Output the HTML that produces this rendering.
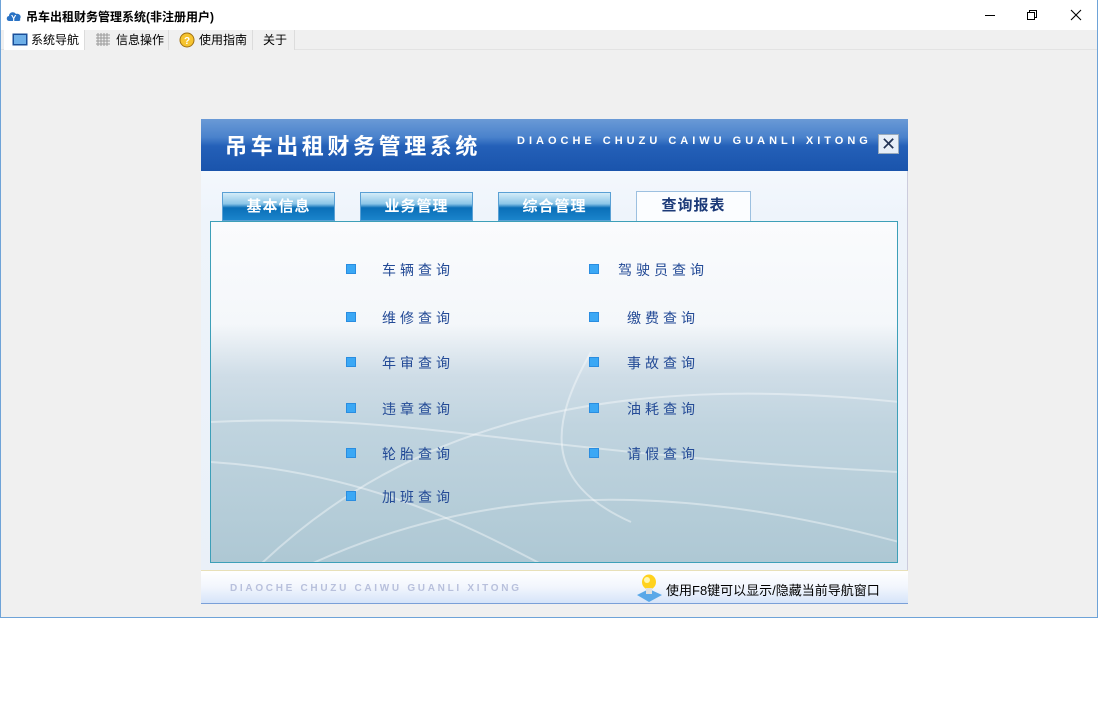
<!DOCTYPE html>
<html><head><meta charset="utf-8"><style>
*{margin:0;padding:0;box-sizing:border-box}
body{width:1098px;height:713px;background:#fff;position:relative;overflow:hidden;font-family:"Liberation Sans","Noto Sans CJK SC",sans-serif}
.win{position:absolute;left:0;top:0;width:1098px;height:618px;border:1px solid #6ea3d8;border-top:none;background:#f0f0f0}
.title{position:absolute;left:0;top:0;width:1096px;height:30px;background:#fff;font-size:12px;font-weight:bold;color:#000}
.title span{position:absolute;left:25px;top:8px}
.ctl{position:absolute;top:6px;font-size:12px;color:#222;font-weight:normal}
.menu{position:absolute;left:0;top:30px;height:20px;width:1096px;background:#f0f0f0;border-bottom:1px solid #e3e3e3;font-size:12px}
.mi{position:absolute;top:0;height:20px;line-height:21px;border-right:1px solid #dcdcdc;background:#f0f0f0}
.panel{position:absolute;left:200px;top:119px;width:707px;height:485px;background:linear-gradient(#fafcff,#eef4fb 20%,#e9f0f8);border-right:1px solid #ccd;}
.hdr{position:absolute;left:0;top:0;width:707px;height:52px;background:linear-gradient(#6a9ad6 0%,#4a82cc 35%,#2460b8 52%,#1a54ac 100%)}
.hdr .t{position:absolute;left:24px;top:10px;font-size:22px;color:#fff;letter-spacing:3.6px;font-weight:bold}
.hdr .e{position:absolute;left:316px;top:16px;font-size:11px;color:#fff;letter-spacing:4px;font-weight:bold}
.x{position:absolute;left:677px;top:15px;width:21px;height:20px;background:#e6eef8;border:1px solid #9ab;color:#235;font-size:18px;line-height:18px;text-align:center}
.tab{position:absolute;top:73px;width:113px;height:29px;background:linear-gradient(#d4ecf8,#8cc6e8 40%,#0a6fb8 55%,#1a84cb);border:1px solid #5aa0d4;color:#fff;font-size:15px;font-weight:bold;text-align:center;line-height:28px;letter-spacing:1px}
.tab.a{background:#fbfdff;color:#1c3a78;height:31px;border-color:#9cc0e0;border-bottom:none;width:115px}
.box{position:absolute;left:9px;top:102px;width:688px;height:342px;border:1px solid #3d9fb8;background:linear-gradient(#fafbfd 0%,#f4f7fa 30%,#cfdde7 45%,#c0d4df 60%,#aec8d4 100%);overflow:hidden}
.it{position:absolute;font-size:14px;color:#234a96;letter-spacing:4px}
.sq{position:absolute;width:10px;height:10px;background:#3ba8f5;border:1px solid #2a8de0}
.foot{position:absolute;left:0;top:451px;width:707px;height:34px;border-top:1px solid #e8e0b8;background:linear-gradient(#fff,#f2f6fd 50%,#d6e4f9);border-bottom:1px solid #7aa0d8}
.foot .e{position:absolute;left:29px;top:12px;font-size:10px;color:#b8c0dc;letter-spacing:2.7px;font-weight:bold}
.foot .h{position:absolute;left:465px;top:9px;font-size:13px;color:#000}
</style></head><body>
<div class="win">
<div class="title">
<svg style="position:absolute;left:5px;top:9px" width="16" height="14" viewBox="0 0 16 14"><path d="M3 12 C0 12 0 7 3 7 C3 3 8 2 10 5 C13 4 16 7 14 10 C15 12 13 12 12 12Z" fill="#2a72c4"/><text x="5" y="12" font-size="8" fill="#fff" font-weight="bold">Y</text></svg>
<span>吊车出租财务管理系统(非注册用户)</span>
<svg style="position:absolute;left:983px;top:10px" width="12" height="10"><path d="M1 5.5h10" stroke="#000"/></svg>
<svg style="position:absolute;left:1025px;top:9px" width="12" height="12"><path d="M1.5 3.5h7v7h-7zM3.5 3.5v-2h7v7h-2" fill="none" stroke="#000"/></svg>
<svg style="position:absolute;left:1069px;top:9px" width="12" height="12"><path d="M1 1l10 10M11 1L1 11" stroke="#000" stroke-width="1.1"/></svg>
</div>
<div class="menu">
<div class="mi" style="left:3px;width:81px;background:#fff"><svg style="position:absolute;left:8px;top:3px" width="16" height="13"><rect x="0.5" y="0.5" width="15" height="12" fill="#1a4f9a"/><rect x="2" y="2" width="12" height="9" fill="#6fb0e8"/></svg><span style="position:absolute;left:27px">系统导航</span></div>
<div class="mi" style="left:84px;width:84px"><svg style="position:absolute;left:11px;top:3px" width="14" height="13"><g stroke="#999" stroke-width="1"><path d="M0 2h14M0 5h14M0 8h14M0 11h14M2 0v13M5 0v13M8 0v13M11 0v13"/></g></svg><span style="position:absolute;left:31px">信息操作</span></div>
<div class="mi" style="left:168px;width:84px"><svg style="position:absolute;left:10px;top:2px" width="16" height="16"><circle cx="8" cy="8" r="7" fill="#f6c430" stroke="#a07010"/><text x="5" y="12" font-size="10" fill="#fff" font-weight="bold">?</text></svg><span style="position:absolute;left:30px">使用指南</span></div>
<div class="mi" style="left:252px;width:42px"><span style="position:absolute;left:10px">关于</span></div>
</div>
<div class="panel">
<div class="hdr"><div class="t">吊车出租财务管理系统</div><div class="e">DIAOCHE CHUZU CAIWU GUANLI XITONG</div><div class="x">✕</div></div>
<div class="tab" style="left:21px">基本信息</div>
<div class="tab" style="left:159px">业务管理</div>
<div class="tab" style="left:297px">综合管理</div>
<div class="tab a" style="left:435px;top:72px">查询报表</div>
<div class="box">
<svg style="position:absolute;left:0;top:0" width="688" height="342"><g fill="none" stroke="#fff" stroke-opacity=".4" stroke-width="2"><path d="M50 342 C200 200 400 150 688 180"/><path d="M0 200 C200 190 300 230 688 250"/><path d="M100 342 C300 250 500 270 688 320"/><path d="M380 130 C340 200 330 260 420 300"/><path d="M0 240 C150 250 250 300 330 342"/></g></svg>
<div class="sq" style="left:135px;top:42px"></div><div class="it" style="left:171px;top:38px">车辆查询</div>
<div class="sq" style="left:378px;top:42px"></div><div class="it" style="left:407px;top:38px">驾驶员查询</div>
<div class="sq" style="left:135px;top:90px"></div><div class="it" style="left:171px;top:86px">维修查询</div>
<div class="sq" style="left:378px;top:90px"></div><div class="it" style="left:416px;top:86px">缴费查询</div>
<div class="sq" style="left:135px;top:135px"></div><div class="it" style="left:171px;top:131px">年审查询</div>
<div class="sq" style="left:378px;top:135px"></div><div class="it" style="left:416px;top:131px">事故查询</div>
<div class="sq" style="left:135px;top:181px"></div><div class="it" style="left:171px;top:177px">违章查询</div>
<div class="sq" style="left:378px;top:181px"></div><div class="it" style="left:416px;top:177px">油耗查询</div>
<div class="sq" style="left:135px;top:226px"></div><div class="it" style="left:171px;top:222px">轮胎查询</div>
<div class="sq" style="left:378px;top:226px"></div><div class="it" style="left:416px;top:222px">请假查询</div>
<div class="sq" style="left:135px;top:269px"></div><div class="it" style="left:171px;top:265px">加班查询</div>
</div>
<div class="foot"><div class="e">DIAOCHE CHUZU CAIWU GUANLI XITONG</div>
<svg style="position:absolute;left:434px;top:2px" width="30" height="30"><path d="M2 22 L14 16 L27 22 L14 29Z" fill="#5aa8e8"/><ellipse cx="14" cy="9" rx="7" ry="7.5" fill="#ffd21e"/><ellipse cx="12" cy="7" rx="3" ry="3" fill="#fff8b0"/><rect x="11" y="15" width="6" height="6" fill="#e0e0e0"/></svg>
<div class="h">使用F8键可以显示/隐藏当前导航窗口</div></div>
</div>
</div>
</body></html>
